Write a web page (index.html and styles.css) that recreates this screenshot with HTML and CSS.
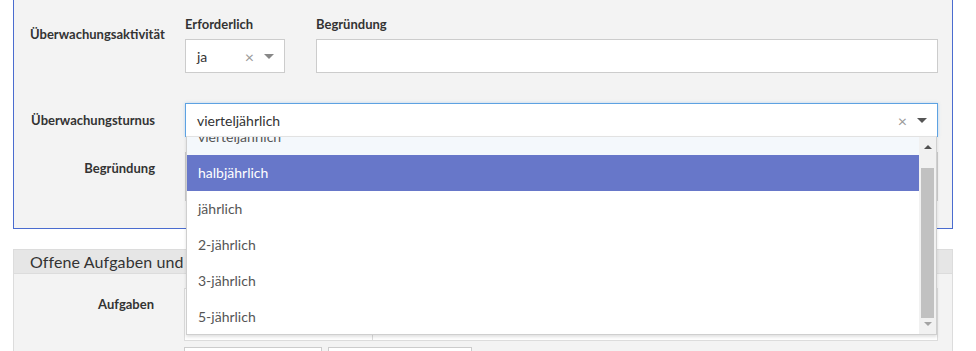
FILE: index.html
```html
<!DOCTYPE html>
<html lang="de">
<head>
    <meta charset="UTF-8">
    <title>Überwachung</title>
    <link rel="stylesheet" href="styles.css">
</head>
<body>
    <!-- Überwachung -->
    <section class="panel panel-active">
        <div class="row">
            <div class="label label-top">Überwachungsaktivität</div>
            <div class="field field-small">
                <div class="sub-label">Erforderlich</div>
                <div class="select">
                    <span class="select-value">ja</span>
                    <span class="select-clear">×</span>
                    <span class="select-arrow"></span>
                </div>
            </div>
            <div class="field field-grow">
                <div class="sub-label">Begründung</div>
                <div class="input"></div>
            </div>
        </div>

        <div class="row row-center">
            <div class="label">Überwachungsturnus</div>
            <div class="field field-grow select-wrap">
                <div class="select select-open">
                    <span class="select-value">vierteljährlich</span>
                    <span class="select-clear">×</span>
                    <span class="select-arrow"></span>
                </div>

                <!-- Dropdown list -->
                <div class="dropdown">
                    <ul class="options">
                        <li class="option current">vierteljährlich</li>
                        <li class="option highlighted">halbjährlich</li>
                        <li class="option">jährlich</li>
                        <li class="option">2-jährlich</li>
                        <li class="option">3-jährlich</li>
                        <li class="option">5-jährlich</li>
                    </ul>
                    <div class="scrollbar">
                        <div class="scroll-arrow up"></div>
                        <div class="scroll-track"><div class="scroll-thumb"></div></div>
                        <div class="scroll-arrow down"></div>
                    </div>
                </div>
            </div>
        </div>

        <div class="row">
            <div class="label label-textarea">Begründung</div>
            <div class="field field-grow">
                <div class="textarea"></div>
            </div>
        </div>
    </section>

    <!-- Offene Aufgaben -->
    <section class="panel panel-tasks">
        <div class="panel-heading">Offene Aufgaben und Anmerkungen</div>
        <div class="panel-body">
            <div class="row">
                <div class="label label-textarea">Aufgaben</div>
                <div class="field field-grow">
                    <div class="task-table">
                        <div class="task-cell task-cell-first"></div>
                        <div class="task-cell"></div>
                    </div>
                    <div class="task-buttons">
                        <div class="task-button"></div>
                        <div class="task-button"></div>
                    </div>
                </div>
            </div>
        </div>
    </section>
</body>
</html>
```

FILE: styles.css
```css
/* General Styles */
body {
    margin: 0;
    background-color: #ffffff;
    font-family: Lato, "Open Sans", sans-serif;
    color: #333;
    overflow: hidden;
}

/* Panels */
.panel {
    width: 940px;
    margin-left: 13px;
    box-sizing: border-box;
}

.panel-active {
    background-color: #f3f3f3;
    border: 1px solid #4a6ccf;
    border-top: none;
    padding: 15px 14px 27px 16px;
}

.panel-tasks {
    margin-top: 20px;
    border: 1px solid #dcdcdc;
    background-color: #f3f3f3;
}

.panel-heading {
    height: 23px;
    line-height: 23px;
    background-color: #e6e6e6;
    border-bottom: 1px solid #dcdcdc;
    padding-left: 16px;
    font-size: 16px;
    letter-spacing: 0.1px;
    color: #333;
}

.panel-body {
    padding: 14px 14px 0 15px;
}

/* Rows */
.row {
    display: flex;
    gap: 30px;
    align-items: flex-start;
}

.row + .row {
    margin-top: 30px;
}

.row-center {
    align-items: center;
}

.row-center + .row {
    margin-top: 15px;
}

.label {
    width: 125px;
    flex-shrink: 0;
    text-align: right;
    white-space: nowrap;
    font-size: 13px;
    font-weight: bold;
    line-height: 18px;
    color: #333;
}

.label-top {
    margin-top: 10px;
}

.label-textarea {
    padding-top: 7px;
}

.field-small {
    width: 100px;
    flex-shrink: 0;
}

.field-small + .field {
    margin-left: 1px;
}

.field-grow {
    flex: 1;
}

.sub-label {
    font-size: 13px;
    font-weight: bold;
    line-height: 18px;
    margin-bottom: 6px;
}

/* Inputs */
.input,
.select,
.textarea {
    box-sizing: border-box;
    background-color: #fff;
    border: 1px solid #cccccc;
}

.input {
    height: 34px;
}

.textarea {
    height: 49px;
}

.select {
    height: 34px;
    display: flex;
    align-items: center;
    padding: 0 10px 0 11px;
    font-size: 14px;
    color: #333;
}

.select-value {
    flex: 1;
}

.select-clear {
    color: #9a9a9a;
    font-size: 16px;
    margin-right: 10px;
}

.select-arrow {
    width: 0;
    height: 0;
    border-left: 5px solid transparent;
    border-right: 5px solid transparent;
    border-top: 5px solid #888;
}

.select-open {
    border-color: #5da2e2;
    box-shadow: 0 0 3px rgba(93, 162, 226, 0.35);
}

.select-open .select-arrow {
    border-top-color: #555;
}

/* Dropdown */
.select-wrap {
    position: relative;
}

.dropdown {
    position: absolute;
    top: 33px;
    left: 1px;
    right: 1px;
    height: 199px;
    box-sizing: border-box;
    background-color: #fff;
    border: 1px solid #cfcfcf;
    border-top-color: #e2e2e2;
    box-shadow: 0 2px 3px rgba(0, 0, 0, 0.12);
    display: flex;
    overflow: hidden;
    z-index: 10;
}

.options {
    list-style: none;
    margin: -18px 0 0 0;
    padding: 0;
    flex: 1;
}

.option {
    height: 36px;
    line-height: 36px;
    padding-left: 11px;
    font-size: 14px;
    color: #555;
}

.option.current {
    background-color: #f4f8fc;
}

.option.highlighted {
    background-color: #6777c9;
    color: #fff;
}

/* Scrollbar */
.scrollbar {
    width: 17px;
    background-color: #f1f1f1;
    display: flex;
    flex-direction: column;
}

.scroll-arrow {
    height: 14px;
    display: flex;
    justify-content: center;
    align-items: center;
}

.scroll-arrow.up {
    margin-top: 3px;
}

.scroll-arrow.up::after {
    content: "";
    border-left: 4px solid transparent;
    border-right: 4px solid transparent;
    border-bottom: 4px solid #505050;
}

.scroll-arrow.down {
    margin-bottom: 3px;
}

.scroll-arrow.down::after {
    content: "";
    border-left: 4px solid transparent;
    border-right: 4px solid transparent;
    border-top: 4px solid #a3a3a3;
}

.scroll-track {
    flex: 1;
    padding: 14px 2px 0 2px;
    box-sizing: border-box;
}

.scroll-thumb {
    height: 150px;
    background-color: #c1c1c1;
}

/* Aufgaben table */
.task-table {
    display: flex;
    height: 53px;
    box-sizing: border-box;
    background-color: #fff;
    border: 1px solid #dcdcdc;
}

.task-cell {
    flex: 1;
}

.task-cell-first {
    flex: 0 0 187px;
    border-right: 1px solid #dcdcdc;
}

.task-buttons {
    display: flex;
    gap: 6px;
    margin-top: 6px;
}

.task-button {
    width: 138px;
    height: 30px;
    box-sizing: border-box;
    background-color: #fff;
    border: 1px solid #cccccc;
}

.task-button + .task-button {
    width: 144px;
}
```
